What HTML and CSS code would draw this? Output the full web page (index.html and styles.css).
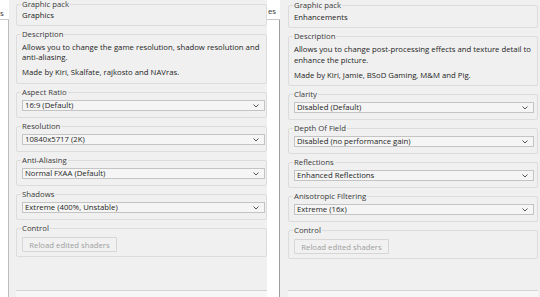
FILE: index.html
```html
<!DOCTYPE html>
<html lang="en">
<head>
    <meta charset="UTF-8">
    <title>Graphic Packs</title>
    <link rel="stylesheet" href="styles.css">
</head>
<body>
    <div class="screen">
        <!-- Left capture: Graphics pack -->
        <section class="shot shot-left">
            <div class="gutter">
                <div class="tab">s</div>
                <div class="tab-rest"></div>
            </div>
            <div class="page">
                <fieldset class="group group-pack">
                    <legend>Graphic pack</legend>
                    <div class="value">Graphics</div>
                </fieldset>
                <fieldset class="group group-desc">
                    <legend>Description</legend>
                    <p>Allows you to change the game resolution, shadow resolution and anti-aliasing.</p>
                    <p class="credits">Made by Kiri, Skalfate, rajkosto and NAVras.</p>
                </fieldset>
                <fieldset class="group">
                    <legend>Aspect Ratio</legend>
                    <div class="select"><span>16:9 (Default)</span><svg class="chev" viewBox="0 0 6 4"><path d="M0.5 0.5 L3 3 L5.5 0.5"/></svg></div>
                </fieldset>
                <fieldset class="group">
                    <legend>Resolution</legend>
                    <div class="select"><span>10840x5717 (2K)</span><svg class="chev" viewBox="0 0 6 4"><path d="M0.5 0.5 L3 3 L5.5 0.5"/></svg></div>
                </fieldset>
                <fieldset class="group">
                    <legend>Anti-Aliasing</legend>
                    <div class="select"><span>Normal FXAA (Default)</span><svg class="chev" viewBox="0 0 6 4"><path d="M0.5 0.5 L3 3 L5.5 0.5"/></svg></div>
                </fieldset>
                <fieldset class="group">
                    <legend>Shadows</legend>
                    <div class="select"><span>Extreme (400%, Unstable)</span><svg class="chev" viewBox="0 0 6 4"><path d="M0.5 0.5 L3 3 L5.5 0.5"/></svg></div>
                </fieldset>
                <fieldset class="group group-control">
                    <legend>Control</legend>
                    <button disabled>Reload edited shaders</button>
                </fieldset>
                <div class="spacer"></div>
                <div class="footer"></div>
            </div>
        </section>

        <!-- Right capture: Enhancements pack -->
        <section class="shot shot-right">
            <div class="gutter">
                <div class="tab">es</div>
                <div class="tab-rest"></div>
            </div>
            <div class="page">
                <fieldset class="group group-pack">
                    <legend>Graphic pack</legend>
                    <div class="value">Enhancements</div>
                </fieldset>
                <fieldset class="group group-desc">
                    <legend>Description</legend>
                    <p>Allows you to change post-processing effects and texture detail to enhance the picture.</p>
                    <p class="credits">Made by Kiri, Jamie, BSoD Gaming, M&amp;M and Pig.</p>
                </fieldset>
                <fieldset class="group">
                    <legend>Clarity</legend>
                    <div class="select"><span>Disabled (Default)</span><svg class="chev" viewBox="0 0 6 4"><path d="M0.5 0.5 L3 3 L5.5 0.5"/></svg></div>
                </fieldset>
                <fieldset class="group">
                    <legend>Depth Of Field</legend>
                    <div class="select"><span>Disabled (no performance gain)</span><svg class="chev" viewBox="0 0 6 4"><path d="M0.5 0.5 L3 3 L5.5 0.5"/></svg></div>
                </fieldset>
                <fieldset class="group">
                    <legend>Reflections</legend>
                    <div class="select"><span>Enhanced Reflections</span><svg class="chev" viewBox="0 0 6 4"><path d="M0.5 0.5 L3 3 L5.5 0.5"/></svg></div>
                </fieldset>
                <fieldset class="group">
                    <legend>Anisotropic Filtering</legend>
                    <div class="select"><span>Extreme (16x)</span><svg class="chev" viewBox="0 0 6 4"><path d="M0.5 0.5 L3 3 L5.5 0.5"/></svg></div>
                </fieldset>
                <fieldset class="group group-control">
                    <legend>Control</legend>
                    <button disabled>Reload edited shaders</button>
                </fieldset>
                <div class="spacer"></div>
                <div class="footer"></div>
            </div>
        </section>
    </div>
</body>
</html>
```

FILE: styles.css
```css
/* Reset and base styles */
* {
    box-sizing: border-box;
    margin: 0;
    padding: 0;
}

html, body {
    width: 540px;
    height: 297px;
    overflow: hidden;
}

body {
    font-family: 'Open Sans', 'Noto Sans', sans-serif;
    font-size: 7.75px;
    line-height: 10px;
    color: #222;
    background-color: #fff;
}

.screen {
    display: flex;
    height: 297px;
}

/* One captured window */
.shot {
    display: flex;
    height: 100%;
}

.shot-left {
    width: 267px;
}

.shot-right {
    flex: 1;
}

/* Tab strip remains at the left of each capture */
.gutter {
    display: flex;
    flex-direction: column;
    width: 9px;
}

.shot-right .gutter {
    width: 13px;
}

.gutter .tab {
    height: 20px;
    padding-top: 8px;
    border-bottom: 1px solid #c9c9c9;
    color: #333;
    white-space: nowrap;
}

.shot-right .gutter .tab {
    padding-left: 1px;
    padding-top: 6px;
}

.gutter .tab-rest {
    flex: 1;
    border-right: 1px solid #bdbdbd;
}

.shot-right .gutter .tab-rest {
    border-right-color: #9e9e9e;
}

/* Grey page holding the group boxes */
.page {
    flex: 1;
    display: flex;
    flex-direction: column;
    background-color: #f0f0f0;
    overflow: hidden;
    padding-left: 7px;
}

.shot-left .group {
    width: 251px;
    flex-shrink: 0;
    padding-right: 1px;
}

.shot-right .page {
    padding-left: 8px;
    padding-right: 2px;
}

.shot-right .group {
    padding-right: 3px;
}

.group {
    border: 1px solid #dcdcdc;
    border-radius: 2px;
    padding: 0 5px 6px;
    margin-bottom: 3px;
}

.group legend {
    padding: 0 1px;
    margin-left: -1px;
    color: #3a3a3a;
    line-height: 10px;
}

.group-pack {
    margin-top: -1px;
    padding-top: 1px;
    padding-bottom: 5px;
}

.shot-right .group-pack {
    margin-top: 0;
    padding-top: 2px;
    margin-bottom: 3px;
}

.value {
    color: #222;
}

.group-desc {
    padding-top: 3px;
    padding-bottom: 6px;
}

.group-desc p {
    color: #1e1e1e;
}

.group-desc .credits {
    margin-top: 5px;
}

.shot-right .group-desc {
    padding-bottom: 4px;
}

.shot-right .group-desc p {
    line-height: 11px;
}

.shot-right .group-desc .credits {
    margin-top: 4px;
}

/* Combo boxes */
.select {
    display: flex;
    align-items: center;
    justify-content: space-between;
    height: 11px;
    margin-top: 3px;
    padding: 0 5px 0 2px;
    border: 1px solid #c4c4c4;
    background-color: #f5f5f5;
    color: #1e1e1e;
    line-height: 9px;
}

.chev {
    width: 6px;
    height: 4px;
}

.chev path {
    fill: none;
    stroke: #555;
    stroke-width: 1;
}

/* Disabled button */
.group-control {
    padding-bottom: 4px;
}

button {
    display: block;
    width: 95px;
    height: 15px;
    margin-top: 4px;
    border: 1px solid #d6d6d6;
    border-radius: 1px;
    background-color: #f1f1f1;
    color: #a0a0a0;
    font-family: inherit;
    font-size: 7.75px;
}

.spacer {
    flex: 1;
}

.footer {
    height: 7px;
    border-top: 1px solid #d4d4d4;
    background-color: #f6f6f6;
}
```
